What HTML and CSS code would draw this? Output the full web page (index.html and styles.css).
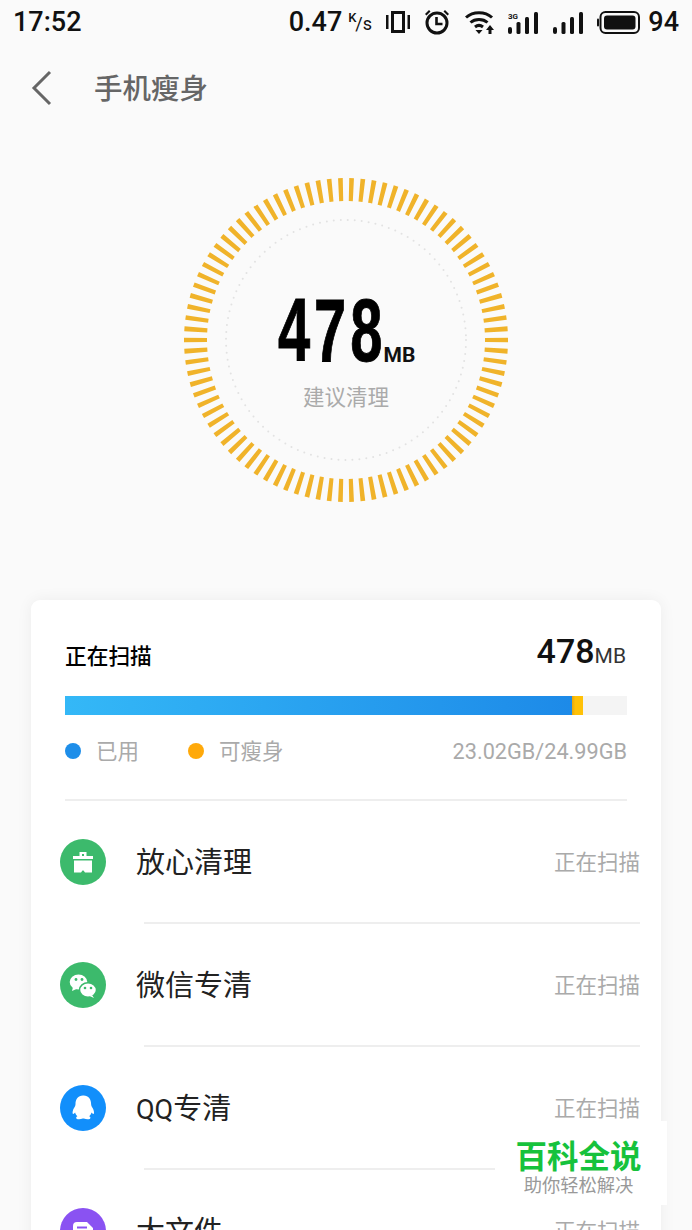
FILE: index.html
```html
<!DOCTYPE html>
<html lang="zh-CN">
<head>
	<meta charset="utf-8">
	<meta name="viewport" content="width=device-width, initial-scale=1">
	<title>手机瘦身</title>
	<link rel="stylesheet" href="styles.css">
</head>
<body>
	<div class="page">
		<div class="status">
			<span class="time">17:52</span>
			<div class="status-right">
				<span class="speed">0.47</span>
				<span class="speed-unit"><i class="u-k">K</i><i class="u-s">/s</i></span>
				<svg class="ico-vib" width="24" height="24" viewBox="0 0 24 24"><rect x="0" y="5" width="2.5" height="14"/><rect x="21.5" y="5" width="2.5" height="14"/><path d="M5 1h14v22H5z M8 4v16h8V4z" fill-rule="evenodd"/></svg>
				<svg class="ico-alarm" width="26" height="26" viewBox="0 0 26 26"><circle cx="13" cy="14" r="10" fill="none" stroke="#111" stroke-width="3"/><path d="M12.5 8v7h6" fill="none" stroke="#111" stroke-width="2.6"/><path d="M1 5l4-4 1.5 1.5-4 4zM25 5l-4-4-1.500 1.500 4 4z"/></svg>
				<svg class="ico-wifi" width="30" height="25" viewBox="0 0 30 25"><g fill="none" stroke="#111" stroke-width="3"><path d="M1 7.500C8 1 20 1 27 7.500"/><path d="M5.500 12.500C10 8.500 18 8.500 22.500 12.500"/><path d="M10 17c2.500-2 5.500-2 8 0"/></g><path d="M14 24l-3.500-4h7zM25 15l4 5h-2.500v4h-3v-4H21z"/></svg>
				<svg class="ico-sig" width="30" height="23" viewBox="0 0 30 23"><rect x="0" y="16" width="4" height="7" rx="2"/><rect x="8.500" y="11" width="4" height="12" rx="1.500"/><rect x="17" y="6" width="4" height="17" rx="1.500"/><rect x="26" y="1" width="4" height="22" rx="1.500"/><text x="0" y="8" class="sig-3g">3G</text></svg>
				<svg class="ico-sig2" width="30" height="23" viewBox="0 0 30 23"><rect x="0" y="16" width="4" height="7" rx="2"/><rect x="8.500" y="11" width="4" height="12" rx="1.500"/><rect x="17" y="6" width="4" height="17" rx="1.500"/><rect x="26" y="1" width="4" height="22" rx="1.500"/></svg>
				<svg class="ico-bat" width="43" height="23" viewBox="0 0 43 23"><rect x="3.500" y="1" width="38.500" height="21" rx="5" fill="none" stroke="#111" stroke-width="2"/><rect x="7" y="4.500" width="31.500" height="14" rx="3"/><rect x="0" y="7.500" width="2" height="8" rx="1"/></svg>
				<span class="bat-num">94</span>
			</div>
		</div>

		<header class="topbar">
			<svg class="back" width="22" height="36" viewBox="0 0 22 36"><path d="M19 2L3 18l16 16" fill="none" stroke="#666" stroke-width="3"/></svg>
			<h1 class="title">手机瘦身</h1>
		</header>

		<section class="hero">
			<div class="ring-box">
				<svg class="ring" width="330" height="330" viewBox="0 0 330 330">
					<circle cx="165" cy="165" r="120" fill="none" stroke="#e2e2e2" stroke-width="2" stroke-linecap="round" stroke-dasharray="0 7"/>
					<circle class="ticks" cx="165" cy="165" r="150.500" fill="none" pathLength="90"/>
				</svg>
				<div class="ring-text">
					<div class="big-line"><span class="big-num">478</span><span class="big-unit">MB</span></div>
					<div class="ring-label">建议清理</div>
				</div>
			</div>
		</section>

		<section class="card">
			<div class="card-head">
				<div class="scan-title">正在扫描</div>
				<div class="scan-size"><b>478</b><span>MB</span></div>
			</div>
			<div class="bar">
				<div class="bar-used"></div>
				<div class="bar-slim"></div>
			</div>
			<div class="legend">
				<span class="dot dot-blue"></span><span class="leg-text">已用</span>
				<span class="dot dot-orange"></span><span class="leg-text">可瘦身</span>
				<span class="leg-total">23.02GB/24.99GB</span>
			</div>
			<div class="rule"></div>

			<ul class="list">
				<li class="row">
					<span class="icon green">
						<svg width="46" height="46" viewBox="0 0 46 46"><path d="M19.500 13h7v4h6.500v3H13v-3h6.500z M22 15v2h2v-2z" fill="#fff" fill-rule="evenodd"/><path d="M14 21.500h18v12h-7l-1.500-2h-1l-1.500 2h-7z" fill="#fff"/></svg>
					</span>
					<span class="row-name">放心清理</span>
					<span class="row-state">正在扫描</span>
				</li>
				<li class="row">
					<span class="icon green">
						<svg width="46" height="46" viewBox="0 0 46 46"><ellipse cx="18.500" cy="20" rx="8.800" ry="7.500" fill="#fff"/><path d="M13 25l-1 4 4.500-2z" fill="#fff"/><ellipse cx="28" cy="28" rx="8.500" ry="7.300" fill="#fff" stroke="#3cba6c" stroke-width="1.500"/><path d="M32 33l2 3-4.500-2z" fill="#fff"/><circle cx="16" cy="17.500" r="1.400" fill="#3cba6c"/><circle cx="22" cy="17.500" r="1.400" fill="#3cba6c"/><circle cx="25" cy="26" r="1.300" fill="#3cba6c"/><circle cx="31" cy="26" r="1.300" fill="#3cba6c"/></svg>
					</span>
					<span class="row-name">微信专清</span>
					<span class="row-state">正在扫描</span>
				</li>
				<li class="row">
					<span class="icon blue">
						<svg width="46" height="46" viewBox="0 0 46 46"><path d="M23 10.500c-5 0-7.500 4-7.500 8.500 0 1.500-.5 2.500-1.500 4-1.200 2-1.800 4.500-1.200 5.800.5.600 1.500-.3 2.300-1.300.5 1.700 1.300 3 2.300 3.800-1.300.6-1.800 2-.5 2.600 1.500.5 4 .4 5.800-.4h1.200c1.800.8 4.300.9 5.800.4 1.300-.6.800-2-.5-2.600 1-.8 1.800-2.100 2.300-3.800.8 1 1.800 1.900 2.300 1.300.6-1.300 0-3.800-1.200-5.800-1-1.500-1.500-2.500-1.500-4 0-4.500-2.500-8.500-7.500-8.500z" fill="#fff"/></svg>
					</span>
					<span class="row-name"><span class="qq">QQ</span>专清</span>
					<span class="row-state">正在扫描</span>
				</li>
				<li class="row">
					<span class="icon purple">
						<svg width="46" height="46" viewBox="0 0 46 46"><path d="M17 14h10l6 6v16H13V18q0-4 4-4z M17 18.500v2h10v-2z" fill="#fff" fill-rule="evenodd"/></svg>
					</span>
					<span class="row-name">大文件</span>
					<span class="row-state">正在扫描</span>
				</li>
			</ul>
		</section>

		<div class="mark">
			<div class="mark-main">百科全说</div>
			<div class="mark-sub">助你轻松解决</div>
		</div>
	</div>
</body>
</html>
```

FILE: styles.css
```css
html, body {
	margin: 0;
	padding: 0;
	background: #fafafa;
}
.page {
	position: relative;
	width: 692px;
	height: 1230px;
	overflow: hidden;
	background: #fafafa;
	font-family: "Noto Sans CJK SC", Roboto, sans-serif;
}

/* status bar */
.status {
	display: flex;
	justify-content: space-between;
	align-items: center;
	height: 44px;
	padding: 0 13px;
	color: #111;
	font-family: Roboto, sans-serif;
	font-weight: 500;
	font-size: 27px;
}
.status svg {
	display: block;
	fill: #111;
	flex: none;
}
.status-right {
	display: flex;
	align-items: center;
}
.speed-unit {
	position: relative;
	display: block;
	width: 23px;
	height: 22px;
	margin: 0 15px 0 6px;
	font-style: normal;
}
.speed-unit i {
	position: absolute;
	font-style: normal;
	line-height: 1;
}
.u-k {
	left: 0;
	top: 0;
	font-size: 13px;
}
.u-s {
	left: 7px;
	top: 4px;
	font-size: 18px;
	font-weight: 400;
}
.ico-alarm { margin-left: 14px; }
.ico-wifi { margin-left: 15px; }
.ico-sig { margin-left: 13px; }
.ico-sig2 { margin-left: 15px; }
.ico-bat { margin-left: 14px; }
.bat-num { margin-left: 8px; }
.sig-3g {
	font: bold 8px Roboto, sans-serif;
}

/* title row */
.topbar {
	display: flex;
	align-items: center;
	height: 88px;
	padding-left: 31px;
}
.back { flex: none; }
.title {
	margin: -4px 0 0 41px;
	font-size: 28.500px;
	font-weight: 500;
	color: #666;
}

/* ring */
.hero {
	height: 468px;
	padding-top: 43px;
	box-sizing: border-box;
}
.ring-box {
	position: relative;
	width: 330px;
	height: 330px;
	margin: 0 auto;
}
.ring {
	position: absolute;
	left: 0;
	top: 0;
}
.ticks {
	stroke: #f0b32a;
	stroke-width: 23;
	stroke-dasharray: 0.42 0.58;
	stroke-dashoffset: 0.21;
}
.ring-text {
	position: relative;
	display: flex;
	flex-direction: column;
	align-items: center;
	height: 100%;
	padding-top: 119px;
	box-sizing: border-box;
}
.big-line {
	display: flex;
	align-items: flex-end;
	height: 72px;
	margin-left: 1px;
}
.big-num {
	display: block;
	width: 106px;
	height: 72px;
	font-family: "Liberation Sans", sans-serif;
	font-weight: 700;
	font-size: 89px;
	line-height: 72px;
	letter-spacing: 6px;
	color: #000;
	white-space: nowrap;
	-webkit-text-stroke: 1px #000;
	transform: scaleX(0.65);
	transform-origin: left center;
}
.big-unit {
	font-family: Roboto, sans-serif;
	font-weight: 700;
	font-size: 21px;
	line-height: 1;
	color: #111;
}
.ring-label {
	margin-top: 14px;
	font-size: 21.500px;
	line-height: 32px;
	color: #aaa;
}

/* card */
.card {
	margin: 0 31px;
	height: 760px;
	padding: 0 34px;
	background: #fff;
	border-radius: 9px;
	box-shadow: 0 0 16px rgba(0, 0, 0, 0.06);
}
.card-head {
	display: flex;
	justify-content: space-between;
	align-items: center;
	height: 96px;
	padding: 8px 0 0;
	box-sizing: border-box;
}
.scan-title {
	margin-top: 4px;
	font-size: 21.700px;
	font-weight: 500;
	color: #000;
}
.scan-size {
	margin: 0 1px 2px 0;
	font-family: Roboto, sans-serif;
	color: #111;
}
.scan-size b {
	font-size: 34px;
	font-weight: 500;
}
.scan-size span {
	font-size: 21px;
	color: #333;
}
.bar {
	display: flex;
	height: 19px;
	background: #f4f4f4;
}
.bar-used {
	width: 507px;
	background: linear-gradient(90deg, #34b8f7, #1d8ae8);
}
.bar-slim {
	width: 11px;
	background: linear-gradient(90deg, #e5a60f, #ffc107 30%);
}
.legend {
	display: flex;
	align-items: center;
	height: 84px;
	padding-bottom: 12px;
	box-sizing: border-box;
	font-size: 21.500px;
	color: #aaa;
}
.leg-text {
	margin-top: -3px;
}
.dot {
	width: 16px;
	height: 16px;
	border-radius: 50%;
	margin-right: 15px;
}
.dot-blue { background: #1e8ee9; }
.dot-orange {
	background: #ffa90a;
	margin-left: 49px;
}
.leg-total {
	margin-left: auto;
	font-family: Roboto, sans-serif;
	font-size: 21.700px;
}
.rule {
	height: 2px;
	background: #eee;
}

/* rows */
.list {
	list-style-type: none;
	margin: 0 -13px 0 -5px;
	padding: 0;
}
.row {
	position: relative;
	display: flex;
	align-items: center;
	height: 123px;
	box-sizing: border-box;
	border-bottom: 2px solid #eee;
}
.row::after {
	content: "";
	position: absolute;
	left: 0;
	bottom: -2px;
	width: 84px;
	height: 2px;
	background: #fff;
}
.icon {
	display: block;
	width: 46px;
	height: 46px;
	border-radius: 50%;
	flex: none;
}
.icon svg { display: block; }
.green { background: #3cba6c; }
.blue { background: #128ffb; }
.purple { background: #8a52f2; }
.row-name {
	margin: -4px 0 0 30px;
	font-size: 29px;
	color: #222;
}
.qq {
	font-family: Roboto, sans-serif;
	font-size: 27px;
}
.row-state {
	margin: -2px 0 0 auto;
	font-size: 21.500px;
	color: #aaa;
}

/* watermark */
.mark {
	position: absolute;
	left: 495px;
	top: 1121px;
	width: 172px;
	height: 84px;
	padding-right: 5px;
	box-sizing: border-box;
	background: #fff;
	text-align: center;
}
.mark-main {
	margin-top: 15px;
	font-size: 31.500px;
	font-weight: 700;
	line-height: 36px;
	color: #16c23c;
}
.mark-sub {
	font-size: 18.300px;
	line-height: 24px;
	color: #999;
}
```
